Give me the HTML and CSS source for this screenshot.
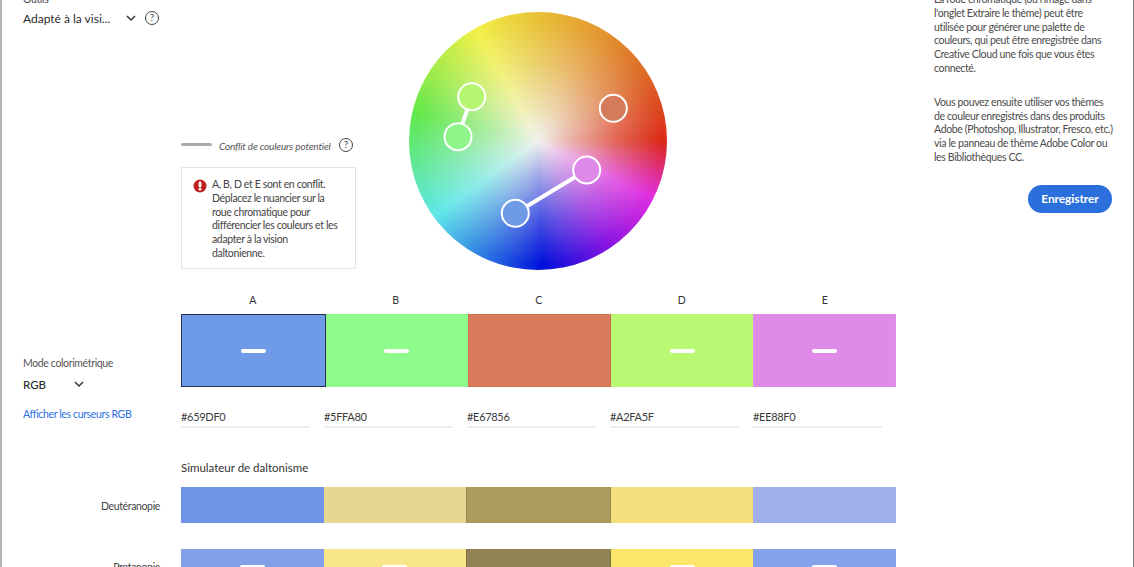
FILE: index.html
```html
<!DOCTYPE html>
<html lang="fr">
<head>
    <meta charset="UTF-8">
    <title>Adobe Color</title>
    <link rel="stylesheet" href="styles.css">
</head>
<body>
<div class="page">
    <div class="top">
        <div class="tools">
            <div class="tools-label">Outils</div>
            <div class="tools-select">
                <span class="tools-value">Adapté à la visi...</span>
                <svg class="chevron" width="10" height="7" viewBox="0 0 10 7"><polyline points="1,1 5,5 9,1"/></svg>
                <span class="help">?</span>
            </div>
        </div>
        <div class="legend">
            <div class="legend-row">
                <span class="legend-line"></span>
                <span class="legend-text">Conflit de couleurs potentiel</span>
                <span class="help">?</span>
            </div>
            <div class="alert">
                <svg class="alert-icon" width="14" height="14" viewBox="0 0 14 14">
                    <circle cx="7" cy="7" r="6.5" fill="#c0211f"/>
                    <rect x="5.6" y="2.6" width="2.8" height="5.6" rx="1" fill="#fff"/>
                    <circle cx="7" cy="10.2" r="1.4" fill="#fff"/>
                </svg>
                <p>A, B, D et E sont en conflit.<br>Déplacez le nuancier sur la<br>roue chromatique pour<br>différencier les couleurs et les<br>adapter à la vision<br>daltonienne.</p>
            </div>
        </div>
        <div class="wheel">
            <div class="wheel-fade"></div>
            <svg class="wheel-marks" width="258" height="258" viewBox="0 0 258 258">
                <line x1="62.7" y1="84.7" x2="49" y2="124.7" class="link"/>
                <line x1="177.7" y1="158" x2="106.3" y2="201.3" class="link"/>
                <circle cx="62.7" cy="84.7" r="13.5" fill="#b4f66f" class="handle"/>
                <circle cx="49" cy="124.7" r="13.5" fill="#8ef58a" class="handle"/>
                <circle cx="204.3" cy="96.3" r="13.5" fill="#d57b5c" class="handle"/>
                <circle cx="177.7" cy="158" r="13.5" fill="#de88e8" class="handle"/>
                <circle cx="106.3" cy="201.3" r="13.5" fill="#6f9ae5" class="handle"/>
            </svg>
        </div>
        <div class="about">
            <p>La roue chromatique (ou l'image dans<br>l'onglet Extraire le thème) peut être<br>utilisée pour générer une palette de<br>couleurs, qui peut être enregistrée dans<br>Creative Cloud une fois que vous êtes<br>connecté.</p>
            <p>Vous pouvez ensuite utiliser vos thèmes<br>de couleur enregistrés dans des produits<br>Adobe (Photoshop, Illustrator, Fresco, etc.)<br>via le panneau de thème Adobe Color ou<br>les Bibliothèques CC.</p>
            <div class="about-action"><button class="save">Enregistrer</button></div>
        </div>
    </div>

    <div class="theme">
        <div class="mode">
            <div class="mode-label">Mode colorimétrique</div>
            <div class="mode-select">
                <span class="mode-value">RGB</span>
                <svg class="chevron" width="10" height="7" viewBox="0 0 10 7"><polyline points="1,1 5,5 9,1"/></svg>
            </div>
            <a class="mode-link">Afficher les curseurs RGB</a>
        </div>
        <div class="theme-main">
            <div class="letters">
                <span>A</span><span>B</span><span>C</span><span>D</span><span>E</span>
            </div>
            <div class="swatches">
                <div class="swatch swatch-a selected"><i class="dash"></i></div>
                <div class="swatch swatch-b"><i class="dash"></i></div>
                <div class="swatch swatch-c"></div>
                <div class="swatch swatch-d"><i class="dash"></i></div>
                <div class="swatch swatch-e"><i class="dash"></i></div>
            </div>
            <div class="hexes">
                <div class="hex">#659DF0</div>
                <div class="hex">#5FFA80</div>
                <div class="hex">#E67856</div>
                <div class="hex">#A2FA5F</div>
                <div class="hex">#EE88F0</div>
            </div>
            <div class="sim-title">Simulateur de daltonisme</div>
        </div>
    </div>

    <div class="sim-row">
        <div class="sim-label">Deutéranopie</div>
        <div class="sim-bar">
            <div class="sim" style="background-color: #6f94e6"></div>
            <div class="sim" style="background-color: #e6d892"></div>
            <div class="sim sim-edge" style="background-color: #ab9c5c"></div>
            <div class="sim" style="background-color: #f3e07c"></div>
            <div class="sim" style="background-color: #9fb0ea"></div>
        </div>
    </div>
    <div class="sim-row sim-row-last">
        <div class="sim-label">Protanopie</div>
        <div class="sim-bar">
            <div class="sim" style="background-color: #80a0ea"><i class="box"></i></div>
            <div class="sim" style="background-color: #f9e58a"><i class="box"></i></div>
            <div class="sim sim-edge" style="background-color: #918355"></div>
            <div class="sim" style="background-color: #fbe669"><i class="box"></i></div>
            <div class="sim" style="background-color: #84a2ec"><i class="box"></i></div>
        </div>
    </div>
</div>
</body>
</html>
```

FILE: styles.css
```css
html, body {
    margin: 0;
    padding: 0;
    height: 567px;
    overflow: hidden;
    background-color: #fff;
}

body {
    font-family: "Lato", "Noto Sans", sans-serif;
    font-size: 10.5px;
    letter-spacing: -0.36px;
    color: #4b4b4b;
}

p {
    margin: 0;
}

.page {
    box-sizing: border-box;
    width: 1134px;
    height: 620px;
    margin-top: -8px;
    border-left: 2px solid #b5b5b5;
    border-right: 1px solid #777;
}

.top {
    display: flex;
    height: 300px;
}

.tools {
    width: 179px;
    padding-left: 21px;
    box-sizing: border-box;
    flex: none;
}

.tools-label {
    line-height: 14px;
}

.tools-select {
    display: flex;
    align-items: center;
    margin-top: 4px;
    height: 16px;
}

.tools-value {
    width: 103px;
    font-size: 12px;
    letter-spacing: 0;
    color: #2c2c2c;
    white-space: nowrap;
}

.chevron {
    flex: none;
    fill: none;
    stroke: #333;
    stroke-width: 1.5;
}

.help {
    box-sizing: border-box;
    display: block;
    flex: none;
    width: 14px;
    height: 14px;
    border: 1px solid #444;
    border-radius: 50%;
    font-size: 9px;
    letter-spacing: 0;
    line-height: 12px;
    text-align: center;
    color: #333;
}

.tools-select .help {
    margin-left: 9px;
}

.legend {
    box-sizing: border-box;
    flex: none;
    width: 228px;
    padding-top: 146px;
}

.legend-row {
    display: flex;
    align-items: center;
    height: 14px;
    width: 174px;
}

.legend-line {
    width: 31px;
    height: 3px;
    margin-bottom: 2px;
    border-radius: 2px;
    background-color: #aaa;
}

.legend-text {
    width: 120px;
    margin: 2px 0 0 7px;
    font-size: 10px;
    font-style: italic;
    letter-spacing: -0.16px;
    color: #555;
    white-space: nowrap;
}

.alert {
    box-sizing: border-box;
    display: flex;
    width: 175px;
    height: 102px;
    margin-top: 15px;
    padding: 10px 0 0 11px;
    border: 1px solid #e4e4e4;
}

.alert-icon {
    flex: none;
    margin: 1px 5px 0 0;
}

.alert p {
    line-height: 13.8px;
    color: #444;
    white-space: nowrap;
}

.wheel {
    position: relative;
    flex: none;
    width: 258px;
    height: 258px;
    margin-top: 20px;
    border-radius: 50%;
    background-image: conic-gradient(#e8c035 0deg, #e49a30 28deg, #dd6a28 58deg, #dc2a18 90deg, #e030e0 116deg, #8c14e0 145deg, #0010dc 178deg, #60e8e8 234deg, #62e84a 283deg, #f2f04a 331deg, #e8c035 360deg);
}

.wheel-fade {
    width: 100%;
    height: 100%;
    border-radius: 50%;
    background-image: radial-gradient(circle closest-side, #f2f2ee 0%, rgba(242, 242, 238, 0.68) 25%, rgba(242, 242, 238, 0.3) 60%, rgba(242, 242, 238, 0) 95%);
}

.wheel-marks {
    position: absolute;
    left: 0;
    top: 0;
}

.link {
    stroke: #fff;
    stroke-width: 4;
}

.handle {
    stroke: #fff;
    stroke-width: 2;
}

.about {
    box-sizing: border-box;
    flex: none;
    width: 178px;
    margin-left: 267px;
    padding-top: 1px;
    line-height: 13.8px;
    white-space: nowrap;
}

.about p + p {
    margin-top: 20px;
}

.about-action {
    display: flex;
    justify-content: flex-end;
    margin-top: 20px;
}

.save {
    width: 84px;
    height: 28px;
    padding: 0;
    border: none;
    border-radius: 14px;
    background-color: #2b6fdc;
    color: #fff;
    font-family: inherit;
    font-size: 12px;
    font-weight: 700;
    letter-spacing: -0.1px;
}

.theme {
    display: flex;
}

.mode {
    box-sizing: border-box;
    width: 179px;
    flex: none;
    padding: 64px 0 0 21px;
}

.mode-label {
    line-height: 14px;
    color: #555;
}

.mode-select {
    display: flex;
    align-items: center;
    margin-top: 6px;
    height: 16px;
    font-size: 11.5px;
    letter-spacing: 0;
    color: #2c2c2c;
}

.mode-value {
    width: 51px;
    font-weight: 500;
}

.mode-link {
    display: block;
    margin-top: 15px;
    line-height: 14px;
    color: #2a6ee6;
}

.theme-main {
    width: 715px;
    flex: none;
}

.letters {
    display: flex;
    height: 22px;
    padding-top: 1px;
    box-sizing: border-box;
}

.letters span {
    flex: 1;
    text-align: center;
    line-height: 14px;
    color: #333;
}

.swatches {
    display: flex;
    height: 73px;
}

.swatch {
    box-sizing: border-box;
    flex: 1;
    display: flex;
    align-items: center;
    justify-content: center;
    border: 1px solid transparent;
}

.dash {
    width: 25px;
    height: 4px;
    border-radius: 2px;
    background-color: #fff;
}

.swatch-a { background-color: #6f9ae8; flex: none; width: 144.5px; }
.swatch-b { background-color: #8ffb8c; }
.swatch-c { background-color: #d87c5c; border-color: #d0704f; }
.swatch-d { background-color: #b8f873; }
.swatch-e { background-color: #e08ae8; border-color: #e68cf0; }

.swatch.selected {
    border-color: #20304f;
}

.hexes {
    display: flex;
    gap: 14px;
    width: 701px;
    margin-top: 21px;
}

.hex {
    flex: 1;
    height: 18px;
    border-bottom: 2px solid #eee;
    font-size: 11px;
    letter-spacing: -0.3px;
    line-height: 18px;
    color: #3a3a3a;
}

.sim-title {
    margin-top: 32px;
    font-size: 11.5px;
    letter-spacing: 0;
    line-height: 16px;
    color: #333;
}

.sim-row {
    display: flex;
    margin-top: 11px;
    height: 36px;
}

.sim-row-last {
    margin-top: 26px;
    height: 60px;
}

.sim-label {
    box-sizing: border-box;
    width: 179px;
    padding: 12px 21px 0 0;
    text-align: right;
    line-height: 14px;
    color: #444;
}

.sim-row-last .sim-label {
    padding-top: 11px;
}

.sim-bar {
    display: flex;
    width: 715px;
}

.sim {
    flex: 1;
    display: flex;
    justify-content: center;
    padding-top: 16px;
    box-sizing: border-box;
}

.sim-edge {
    border-left: 1px solid rgba(0, 0, 0, 0.12);
    border-right: 1px solid rgba(0, 0, 0, 0.12);
}

.box {
    width: 25px;
    height: 14px;
    border-radius: 2px;
    background-color: #fff;
}
```
